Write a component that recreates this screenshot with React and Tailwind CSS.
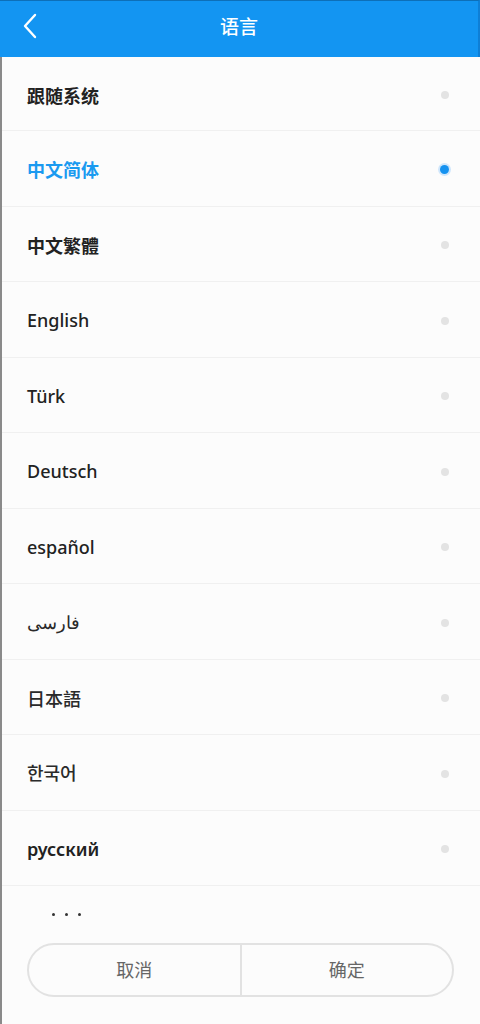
import React from "react";

const langs = [
  { label: "跟随系统", cjk: true },
  { label: "中文简体", cjk: true, selected: true },
  { label: "中文繁體", cjk: true },
  { label: "English" },
  { label: "Türk" },
  { label: "Deutsch" },
  { label: "español" },
  { label: "فارسی", light: true },
  { label: "日本語", cjk: true, light: true },
  { label: "한국어", light: true },
  { label: "русский", bold: true },
];

export default function App() {
  return (
    <div
      className="w-[480px] h-[1024px] bg-[#fcfcfc] flex flex-col overflow-hidden"
      style={{ fontFamily: '"Noto Sans", "Noto Sans CJK SC", sans-serif' }}
    >
      <div className="h-[57px] shrink-0 bg-[#1395f2] border-t border-[#0d6fb8] border-r-2 border-r-[#0e7fd6] flex items-center relative">
        <svg className="absolute left-[22px] top-[12px]" width="16" height="26" viewBox="0 0 16 26">
          <path d="M13 2 L3 13 L13 24" fill="none" stroke="#ffffff" strokeWidth="2.4" strokeLinecap="round" strokeLinejoin="round" />
        </svg>
        <div className="flex-1 text-center text-white text-[19px] font-medium leading-none pb-[3px]">语言</div>
      </div>
      <div className="flex-1 flex flex-col border-l-2 border-[#8a8a8a]">
        {langs.map((l, i) => (
          <div
            key={i}
            className={`${i === 0 ? "h-[74px]" : "h-[75.5px]"} shrink-0 flex items-center justify-between pl-[25px] pr-[29px] pt-[3px] border-b border-[#f0f0f0]`}
          >
            <span
              className={`text-[18px] ${l.selected ? "text-[#1a9af0]" : l.light ? "text-[#2a2a2a]" : "text-[#222]"} ${l.bold ? "font-semibold" : l.cjk && !l.light ? "font-semibold" : "font-medium"}`}
              style={l.cjk ? { fontFamily: '"Noto Sans CJK SC", sans-serif', fontWeight: l.light ? 500 : 600 } : undefined}
            >
              {l.label}
            </span>
            {l.selected ? (
              <span className="w-[13px] h-[13px] rounded-full bg-[#cfe6fb] flex items-center justify-center">
                <span className="w-[9px] h-[9px] rounded-full bg-[#1592f0]" />
              </span>
            ) : (
              <span className="w-[8px] h-[8px] mr-[2px] rounded-full bg-[#e3e3e3]" />
            )}
          </div>
        ))}
        <div className="pl-[50px] pt-[27px] h-[40px] flex gap-[10px]">
          <span className="w-[3px] h-[3px] rounded-full bg-[#333]" />
          <span className="w-[3px] h-[3px] rounded-full bg-[#333]" />
          <span className="w-[3px] h-[3px] rounded-full bg-[#333]" />
        </div>
        <div className="ml-[25px] w-[427px] h-[54px] mt-[17px] rounded-full border-2 border-[#e2e2e2] flex">
          <div className="flex-1 flex items-center justify-center text-[18px] text-[#666] border-r-2 border-[#e2e2e2]">取消</div>
          <div className="flex-1 flex items-center justify-center text-[18px] text-[#666]">确定</div>
        </div>
      </div>
    </div>
  );
}
